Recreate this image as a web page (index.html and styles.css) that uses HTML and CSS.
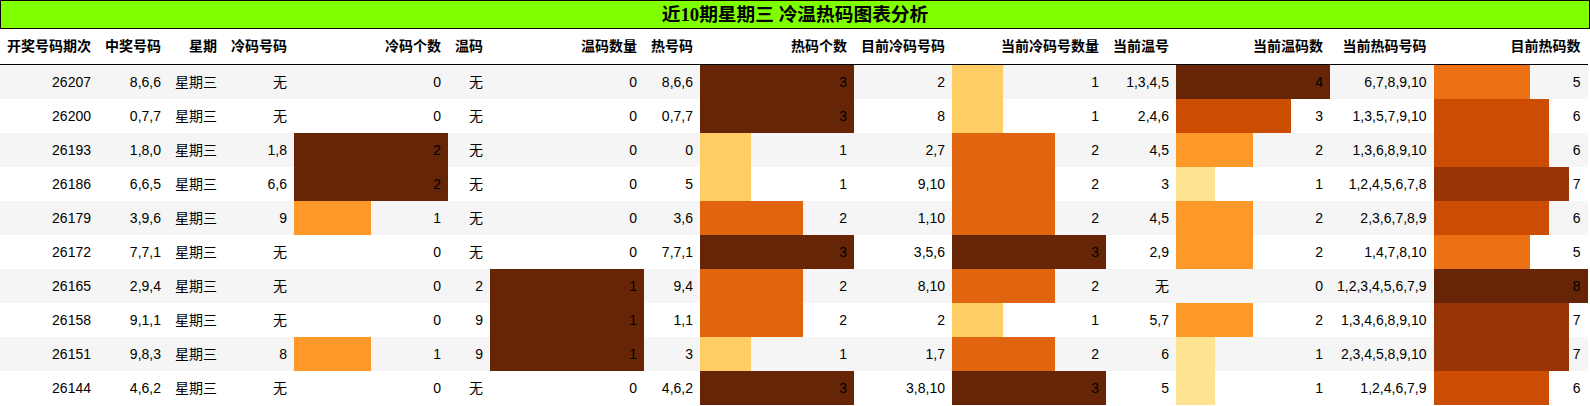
FILE: index.html
```html
<!DOCTYPE html>
<html lang="zh">
<head>
<meta charset="utf-8">
<title>近10期星期三 冷温热码图表分析</title>
<link rel="stylesheet" href="styles.css">
</head>
<body>
<div class="title">近10期星期三 冷温热码图表分析</div>
<table class="chart">
  <thead>
    <tr>
      <th>开奖号码期次</th><th>中奖号码</th><th>星期</th><th>冷码号码</th><th class="barcol">冷码个数</th><th>温码</th><th class="barcol">温码数量</th><th>热号码</th><th class="barcol">热码个数</th><th>目前冷码号码</th><th class="barcol">当前冷码号数量</th><th>当前温号</th><th class="barcol">当前温码数</th><th>当前热码号码</th><th class="barcol">目前热码数</th>
    </tr>
  </thead>
  <tbody>
    <tr>
      <td>26207</td><td>8,6,6</td><td>星期三</td><td>无</td><td class="barcol">0</td><td>无</td><td class="barcol">0</td><td>8,6,6</td>
      <td class="barcol" style="background:linear-gradient(90deg,#662506 100%,transparent 100%)">3</td><td>2</td>
      <td class="barcol" style="background:linear-gradient(90deg,#fece65 33.3%,transparent 33.3%)">1</td><td>1,3,4,5</td>
      <td class="barcol" style="background:linear-gradient(90deg,#662506 100%,transparent 100%)">4</td><td>6,7,8,9,10</td>
      <td class="barcol" style="background:linear-gradient(90deg,#ec7014 62.5%,transparent 62.5%)">5</td>
    </tr>
    <tr>
      <td>26200</td><td>0,7,7</td><td>星期三</td><td>无</td><td class="barcol">0</td><td>无</td><td class="barcol">0</td><td>0,7,7</td>
      <td class="barcol" style="background:linear-gradient(90deg,#662506 100%,transparent 100%)">3</td><td>8</td>
      <td class="barcol" style="background:linear-gradient(90deg,#fece65 33.3%,transparent 33.3%)">1</td><td>2,4,6</td>
      <td class="barcol" style="background:linear-gradient(90deg,#cc4c02 75%,transparent 75%)">3</td><td>1,3,5,7,9,10</td>
      <td class="barcol" style="background:linear-gradient(90deg,#cc4c02 75%,transparent 75%)">6</td>
    </tr>
    <tr>
      <td>26193</td><td>1,8,0</td><td>星期三</td><td>1,8</td>
      <td class="barcol" style="background:linear-gradient(90deg,#662506 100%,transparent 100%)">2</td><td>无</td><td class="barcol">0</td><td>0</td>
      <td class="barcol" style="background:linear-gradient(90deg,#fece65 33.3%,transparent 33.3%)">1</td><td>2,7</td>
      <td class="barcol" style="background:linear-gradient(90deg,#e1640e 66.7%,transparent 66.7%)">2</td><td>4,5</td>
      <td class="barcol" style="background:linear-gradient(90deg,#fe9929 50%,transparent 50%)">2</td><td>1,3,6,8,9,10</td>
      <td class="barcol" style="background:linear-gradient(90deg,#cc4c02 75%,transparent 75%)">6</td>
    </tr>
    <tr>
      <td>26186</td><td>6,6,5</td><td>星期三</td><td>6,6</td>
      <td class="barcol" style="background:linear-gradient(90deg,#662506 100%,transparent 100%)">2</td><td>无</td><td class="barcol">0</td><td>5</td>
      <td class="barcol" style="background:linear-gradient(90deg,#fece65 33.3%,transparent 33.3%)">1</td><td>9,10</td>
      <td class="barcol" style="background:linear-gradient(90deg,#e1640e 66.7%,transparent 66.7%)">2</td><td>3</td>
      <td class="barcol" style="background:linear-gradient(90deg,#fee391 25%,transparent 25%)">1</td><td>1,2,4,5,6,7,8</td>
      <td class="barcol" style="background:linear-gradient(90deg,#993404 87.5%,transparent 87.5%)">7</td>
    </tr>
    <tr>
      <td>26179</td><td>3,9,6</td><td>星期三</td><td>9</td>
      <td class="barcol" style="background:linear-gradient(90deg,#fe9929 50%,transparent 50%)">1</td><td>无</td><td class="barcol">0</td><td>3,6</td>
      <td class="barcol" style="background:linear-gradient(90deg,#e1640e 66.7%,transparent 66.7%)">2</td><td>1,10</td>
      <td class="barcol" style="background:linear-gradient(90deg,#e1640e 66.7%,transparent 66.7%)">2</td><td>4,5</td>
      <td class="barcol" style="background:linear-gradient(90deg,#fe9929 50%,transparent 50%)">2</td><td>2,3,6,7,8,9</td>
      <td class="barcol" style="background:linear-gradient(90deg,#cc4c02 75%,transparent 75%)">6</td>
    </tr>
    <tr>
      <td>26172</td><td>7,7,1</td><td>星期三</td><td>无</td><td class="barcol">0</td><td>无</td><td class="barcol">0</td><td>7,7,1</td>
      <td class="barcol" style="background:linear-gradient(90deg,#662506 100%,transparent 100%)">3</td><td>3,5,6</td>
      <td class="barcol" style="background:linear-gradient(90deg,#662506 100%,transparent 100%)">3</td><td>2,9</td>
      <td class="barcol" style="background:linear-gradient(90deg,#fe9929 50%,transparent 50%)">2</td><td>1,4,7,8,10</td>
      <td class="barcol" style="background:linear-gradient(90deg,#ec7014 62.5%,transparent 62.5%)">5</td>
    </tr>
    <tr>
      <td>26165</td><td>2,9,4</td><td>星期三</td><td>无</td><td class="barcol">0</td><td>2</td>
      <td class="barcol" style="background:linear-gradient(90deg,#662506 100%,transparent 100%)">1</td><td>9,4</td>
      <td class="barcol" style="background:linear-gradient(90deg,#e1640e 66.7%,transparent 66.7%)">2</td><td>8,10</td>
      <td class="barcol" style="background:linear-gradient(90deg,#e1640e 66.7%,transparent 66.7%)">2</td><td>无</td>
      <td class="barcol">0</td><td>1,2,3,4,5,6,7,9</td>
      <td class="barcol" style="background:linear-gradient(90deg,#662506 100%,transparent 100%)">8</td>
    </tr>
    <tr>
      <td>26158</td><td>9,1,1</td><td>星期三</td><td>无</td><td class="barcol">0</td><td>9</td>
      <td class="barcol" style="background:linear-gradient(90deg,#662506 100%,transparent 100%)">1</td><td>1,1</td>
      <td class="barcol" style="background:linear-gradient(90deg,#e1640e 66.7%,transparent 66.7%)">2</td><td>2</td>
      <td class="barcol" style="background:linear-gradient(90deg,#fece65 33.3%,transparent 33.3%)">1</td><td>5,7</td>
      <td class="barcol" style="background:linear-gradient(90deg,#fe9929 50%,transparent 50%)">2</td><td>1,3,4,6,8,9,10</td>
      <td class="barcol" style="background:linear-gradient(90deg,#993404 87.5%,transparent 87.5%)">7</td>
    </tr>
    <tr>
      <td>26151</td><td>9,8,3</td><td>星期三</td><td>8</td>
      <td class="barcol" style="background:linear-gradient(90deg,#fe9929 50%,transparent 50%)">1</td><td>9</td>
      <td class="barcol" style="background:linear-gradient(90deg,#662506 100%,transparent 100%)">1</td><td>3</td>
      <td class="barcol" style="background:linear-gradient(90deg,#fece65 33.3%,transparent 33.3%)">1</td><td>1,7</td>
      <td class="barcol" style="background:linear-gradient(90deg,#e1640e 66.7%,transparent 66.7%)">2</td><td>6</td>
      <td class="barcol" style="background:linear-gradient(90deg,#fee391 25%,transparent 25%)">1</td><td>2,3,4,5,8,9,10</td>
      <td class="barcol" style="background:linear-gradient(90deg,#993404 87.5%,transparent 87.5%)">7</td>
    </tr>
    <tr>
      <td>26144</td><td>4,6,2</td><td>星期三</td><td>无</td><td class="barcol">0</td><td>无</td><td class="barcol">0</td><td>4,6,2</td>
      <td class="barcol" style="background:linear-gradient(90deg,#662506 100%,transparent 100%)">3</td><td>3,8,10</td>
      <td class="barcol" style="background:linear-gradient(90deg,#662506 100%,transparent 100%)">3</td><td>5</td>
      <td class="barcol" style="background:linear-gradient(90deg,#fee391 25%,transparent 25%)">1</td><td>1,2,4,6,7,9</td>
      <td class="barcol" style="background:linear-gradient(90deg,#cc4c02 75%,transparent 75%)">6</td>
    </tr>
  </tbody>
</table>
</body>
</html>
```

FILE: styles.css
```css
html, body {
  margin: 0;
  padding: 0;
  background: #ffffff;
}

.title {
  border: 1px solid #000000;
  background: #7fff00;
  color: #000000;
  text-align: center;
  font-family: "Liberation Serif", "Noto Sans CJK SC", serif;
  font-weight: bold;
  font-size: 18.72px;
  line-height: 27px;
  height: 27px;
}

.chart {
  border-collapse: collapse;
  border-spacing: 0;
  font-family: "Liberation Sans", "Noto Sans CJK SC", sans-serif;
  font-size: 14px;
  color: #000000;
}

.chart th {
  font-weight: bold;
  text-align: right;
  vertical-align: middle;
  padding: 7px 7px;
  line-height: 21px;
  white-space: nowrap;
  border-bottom: 1px solid #000000;
}

.chart td {
  text-align: right;
  vertical-align: middle;
  padding: 7px 7px;
  line-height: 20px;
  white-space: nowrap;
}

.chart tbody tr:nth-child(odd) {
  background: #f5f5f5;
}

.chart tbody tr:nth-child(even) {
  background: #ffffff;
}

.chart .barcol {
  width: 10em;
}
```
